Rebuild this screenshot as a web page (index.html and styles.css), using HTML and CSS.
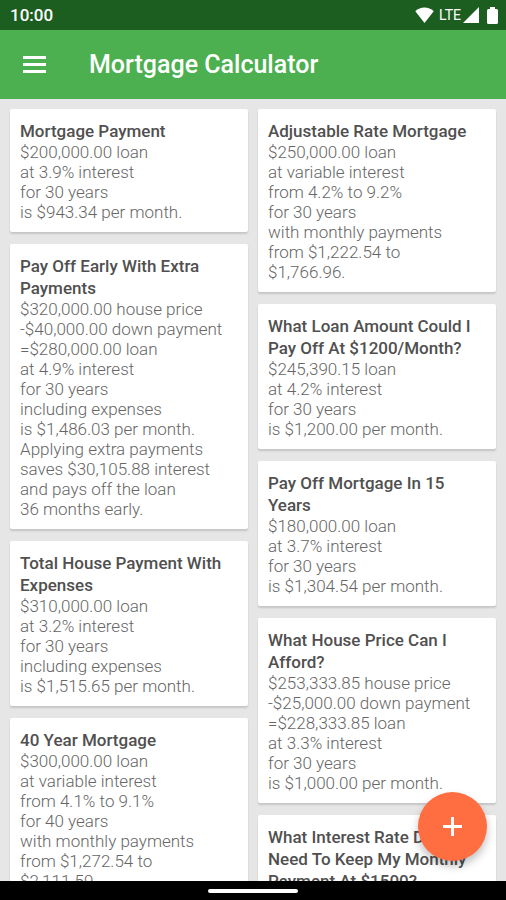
FILE: index.html
```
<!DOCTYPE html>
<html lang="en">
<head>
  <meta charset="UTF-8">
  <meta name="viewport" content="width=device-width, initial-scale=1.0">
  <title>Mortgage Calculator</title>
  <link rel="stylesheet" href="styles.css">
</head>
<body>

  <div class="status-bar">
    <span class="clock">10:00</span>
    <div class="status-icons">
      <svg class="wifi" viewBox="0 0 19 16">
        <path d="M9.500 16L.3 4.300C2.800 1.700 6 .5 9.500.5s6.700 1.200 9.200 3.800z"/>
      </svg>
      <span class="network">LTE</span>
      <svg class="signal" viewBox="0 0 16 16">
        <path d="M0 16L16 0v16z"/>
      </svg>
      <svg class="battery" viewBox="0 0 11 17">
        <path d="M3 0h5v2h1.500a1.500 1.500 0 0 1 1.500 1.500v12a1.500 1.500 0 0 1-1.500 1.500h-8a1.500 1.500 0 0 1-1.500-1.500v-12a1.500 1.500 0 0 1 1.500-1.500H3z"/>
      </svg>
    </div>
  </div>

  <header class="app-bar">
    <button class="menu-button" aria-label="Menu">
      <svg viewBox="0 0 23 17">
        <path d="M0 0h23v3H0zM0 7h23v3H0zM0 14h23v3H0z"/>
      </svg>
    </button>
    <h1>Mortgage Calculator</h1>
  </header>

  <main class="content">
    <div class="column">
      <article class="card">
        <h2>Mortgage Payment</h2>
        <p>
          $200,000.00 loan<br>
          at 3.9% interest<br>
          for 30 years<br>
          is $943.34 per month.
        </p>
      </article>

      <article class="card">
        <h2>Pay Off Early With Extra Payments</h2>
        <p>
          $320,000.00 house price<br>
          -$40,000.00 down payment<br>
          =$280,000.00 loan<br>
          at 4.9% interest<br>
          for 30 years<br>
          including expenses<br>
          is $1,486.03 per month.<br>
          Applying extra payments<br>
          saves $30,105.88 interest<br>
          and pays off the loan<br>
          36 months early.
        </p>
      </article>

      <article class="card">
        <h2>Total House Payment With Expenses</h2>
        <p>
          $310,000.00 loan<br>
          at 3.2% interest<br>
          for 30 years<br>
          including expenses<br>
          is $1,515.65 per month.
        </p>
      </article>

      <article class="card">
        <h2>40 Year Mortgage</h2>
        <p>
          $300,000.00 loan<br>
          at variable interest<br>
          from 4.1% to 9.1%<br>
          for 40 years<br>
          with monthly payments<br>
          from $1,272.54 to<br>
          $2,111.59.
        </p>
      </article>
    </div>

    <div class="column">
      <article class="card">
        <h2>Adjustable Rate Mortgage</h2>
        <p>
          $250,000.00 loan<br>
          at variable interest<br>
          from 4.2% to 9.2%<br>
          for 30 years<br>
          with monthly payments<br>
          from $1,222.54 to<br>
          $1,766.96.
        </p>
      </article>

      <article class="card">
        <h2>What Loan Amount Could I Pay Off At $1200/Month?</h2>
        <p>
          $245,390.15 loan<br>
          at 4.2% interest<br>
          for 30 years<br>
          is $1,200.00 per month.
        </p>
      </article>

      <article class="card">
        <h2>Pay Off Mortgage In 15 Years</h2>
        <p>
          $180,000.00 loan<br>
          at 3.7% interest<br>
          for 30 years<br>
          is $1,304.54 per month.
        </p>
      </article>

      <article class="card">
        <h2>What House Price Can I Afford?</h2>
        <p>
          $253,333.85 house price<br>
          -$25,000.00 down payment<br>
          =$228,333.85 loan<br>
          at 3.3% interest<br>
          for 30 years<br>
          is $1,000.00 per month.
        </p>
      </article>

      <article class="card">
        <h2>What Interest Rate Do I Need To Keep My Monthly Payment At $1500?</h2>
      </article>
    </div>
  </main>

  <button class="fab" aria-label="Add">
    <svg viewBox="0 0 19 19">
      <path d="M8 0h3v8h8v3h-8v8H8v-8H0V8h8z"/>
    </svg>
  </button>

  <footer class="nav-bar">
    <div class="nav-handle"></div>
  </footer>

</body>
</html>
```
FILE: styles.css
```
:root {
  --green: #4caf50;
  --dark-green: #1b5e20;
  --orange: #ff6e40;
  --page-bg: #e6e6e6;
  --title-color: #505050;
  --text-color: #666;
}

* {
  box-sizing: border-box;
}

body {
  display: flex;
  flex-direction: column;
  height: 100vh;
  margin: 0;
  overflow: hidden;
  background-color: var(--page-bg);
  font-family: Roboto, sans-serif;
}

svg {
  display: block;
  fill: currentColor;
}

button {
  border: none;
  padding: 0;
  color: #fff;
  cursor: pointer;
}

.status-bar {
  flex: none;
  display: flex;
  align-items: center;
  justify-content: space-between;
  height: 30px;
  padding: 0 8px 0 10px;
  background-color: var(--dark-green);
  color: #fff;
}

.clock {
  font-size: 17px;
  font-weight: 500;
}

.status-icons {
  display: flex;
  align-items: center;
}

.wifi {
  width: 19px;
  height: 16px;
}

.network {
  margin: 0 2px 0 5px;
  font-size: 14px;
}

.signal {
  width: 16px;
  height: 16px;
}

.battery {
  width: 11px;
  height: 17px;
  margin-left: 8px;
}

.app-bar {
  flex: none;
  display: flex;
  align-items: center;
  gap: 32px;
  height: 69px;
  padding: 0 11px;
  background-color: var(--green);
  color: #fff;
}

.menu-button {
  display: flex;
  align-items: center;
  justify-content: center;
  width: 46px;
  height: 46px;
  background: none;
}

.menu-button svg {
  width: 23px;
  height: 17px;
}

h1 {
  margin: 0;
  font-size: 25px;
  font-weight: 500;
}

.content {
  flex: 1;
  display: grid;
  grid-template-columns: 1fr 1fr;
  gap: 10px;
  min-height: 0;
  padding: 10px 10px 0;
  overflow: hidden;
}

.column {
  display: flex;
  flex-direction: column;
  gap: 12px;
}

.card {
  flex: none;
  padding: 11px 10px 10px;
  border-radius: 2px;
  background-color: #fff;
  box-shadow: 0 2px 2px rgba(0, 0, 0, 0.14);
}

.card h2 {
  margin: 0;
  color: var(--title-color);
  font-size: 17px;
  font-weight: 500;
  line-height: 22px;
}

.card p {
  margin: 0;
  color: var(--text-color);
  font-size: 17px;
  font-weight: 300;
  line-height: 20px;
  white-space: nowrap;
}

.fab {
  position: fixed;
  right: 19px;
  bottom: 39px;
  display: flex;
  align-items: center;
  justify-content: center;
  width: 69px;
  height: 69px;
  border-radius: 50%;
  background-color: var(--orange);
  box-shadow: 0 5px 8px rgba(0, 0, 0, 0.25);
}

.fab svg {
  width: 19px;
  height: 19px;
}

.nav-bar {
  flex: none;
  display: flex;
  align-items: center;
  justify-content: center;
  height: 19px;
  background-color: #000;
}

.nav-handle {
  width: 90px;
  height: 4px;
  border-radius: 2px;
  background-color: #fff;
}
```
